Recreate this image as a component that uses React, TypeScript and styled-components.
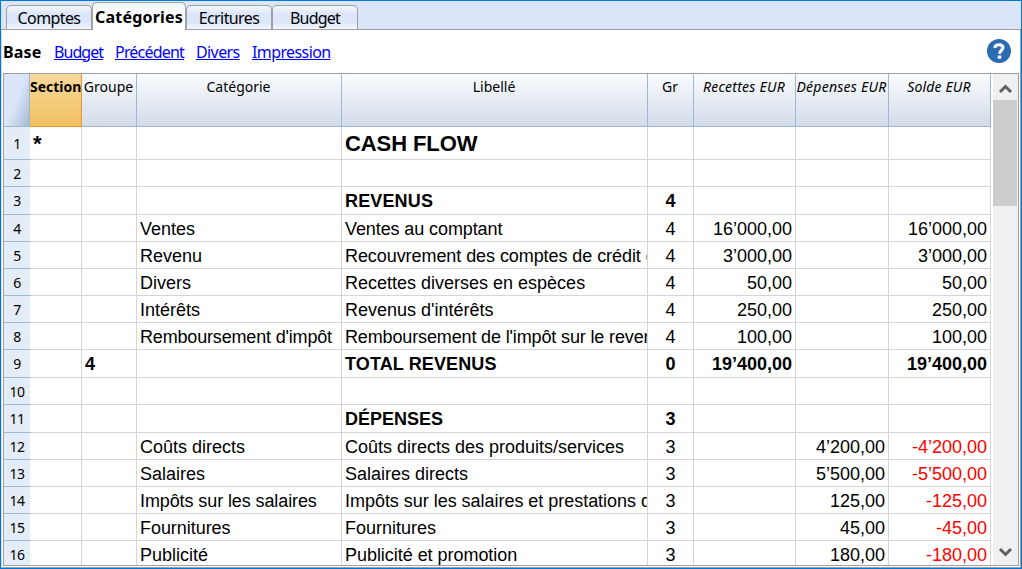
import React from "react";
import styled, { createGlobalStyle, css } from "styled-components";

const GlobalStyle = createGlobalStyle`
  * { box-sizing: border-box; }
  html, body { margin: 0; padding: 0; overflow: hidden; background: #fff; }
`;

const uiFont = `"Noto Sans", "Open Sans", sans-serif`;
const cellFont = `"Liberation Sans", Arial, sans-serif`;

const Window = styled.div`
  width: 1022px;
  height: 569px;
  border: 1px solid #0078d7;
  background: #fff;
  display: flex;
  flex-direction: column;
  font-family: ${uiFont};
  color: #000;
`;

const TabBar = styled.div`
  flex: none;
  height: 29px;
  padding-left: 5px;
  background: #dae5f9;
  border-bottom: 1px solid #a0a0a0;
  display: flex;
  align-items: flex-end;
`;

const Tab = styled.div<{ $active?: boolean; $width: number; $spacing: number }>`
  width: ${(p) => p.$width}px;
  height: 24px;
  border: 1px solid #a0a0a0;
  border-bottom: 0;
  border-radius: 5px 5px 0 0;
  background: linear-gradient(#f4f7fe 0%, #dce6fa 35%, #dce6fa 70%, #f4f7fe 100%);
  font-size: 16px;
  line-height: 24px;
  text-align: center;
  white-space: nowrap;
  letter-spacing: ${(p) => p.$spacing}px;
  ${(p) =>
    p.$active &&
    css`
      height: 28px;
      margin-bottom: -1px;
      font-weight: 700;
      line-height: 29px;
      background: linear-gradient(#f0f4fd, #fff 40%);
    `}
`;

const Body = styled.div`
  flex: 1;
  min-height: 0;
  border: 1px solid #a0a0a0;
  border-top: 0;
  border-left-color: #d8d8d8;
  padding: 0 1px 1px 1px;
  display: flex;
  flex-direction: column;
`;

const ViewBar = styled.div`
  flex: none;
  height: 43px;
  padding: 0 8px 0 0;
  display: flex;
  align-items: center;
  gap: 12px;
  font-size: 16px;
`;

const ViewLabel = styled.b<{ $width: number }>`
  width: ${(p) => p.$width}px;
  white-space: nowrap;
  letter-spacing: 0.2px;
`;

const ViewLink = styled.a<{ $width: number; $spacing: number }>`
  width: ${(p) => p.$width}px;
  white-space: nowrap;
  color: #0000ff;
  text-decoration: underline;
  letter-spacing: ${(p) => p.$spacing}px;
`;

const HelpIcon = styled.svg`
  margin-left: auto;
  margin-top: -1px;
  width: 24px;
  height: 24px;
`;

const GridFrame = styled.div`
  flex: 1;
  min-height: 0;
  border: 1px solid #a0a0a0;
  display: flex;
  justify-content: space-between;
  overflow: hidden;
`;

const Table = styled.div`
  width: 987px;
  flex: none;
`;

const Row = styled.div<{ $height: number }>`
  display: grid;
  grid-template-columns: 26px 52px 55px 205px 306px 46px 102px 93px 102px;
  height: ${(p) => p.$height}px;
`;

const HeaderCorner = styled.div`
  border-right: 1px solid #a0b4cc;
  border-bottom: 1px solid #9eb6ce;
  background: linear-gradient(112deg, #dae5f9 50%, #a4bad4 100%);
`;

const HeaderCell = styled.div<{ $selected?: boolean; $italic?: boolean; $spacing?: number }>`
  padding: 3px 1px 0 0;
  border-right: 1px solid #9eb6ce;
  border-bottom: 1px solid #9eb6ce;
  background: linear-gradient(#f9fcfe, #d3dbe9);
  font-size: 14px;
  line-height: 20px;
  text-align: center;
  white-space: nowrap;
  overflow: hidden;
  font-style: ${(p) => (p.$italic ? "italic" : "normal")};
  letter-spacing: ${(p) => p.$spacing ?? 0}px;
  ${(p) =>
    p.$selected &&
    css`
      padding-right: 0;
      font-weight: 700;
      background: linear-gradient(#f8d99b, #f1c05f);
      border-color: #f29536;
    `}
`;

const RowNumber = styled.div`
  border-bottom: 1px solid #9eb6ce;
  background: #e4ecf7;
  font-size: 14px;
  display: flex;
  align-items: center;
  justify-content: center;
  letter-spacing: -0.5px;
`;

type Align = "left" | "center" | "right";

const Cell = styled.div<{
  $align?: Align;
  $bold?: boolean;
  $title?: boolean;
  $negative?: boolean;
  $spacing?: number;
}>`
  padding: ${(p) => (p.$title ? 1 : 2)}px 3px 0;
  border-right: 1px solid #d5d5d5;
  border-bottom: 1px solid #d5d5d5;
  font-family: ${cellFont};
  font-size: ${(p) => (p.$title ? 22 : 18)}px;
  font-weight: ${(p) => (p.$bold ? 700 : 400)};
  color: ${(p) => (p.$negative ? "#ff0000" : "#000")};
  line-height: ${(p) => (p.$title ? 31 : 25)}px;
  text-align: ${(p) => p.$align ?? "left"};
  letter-spacing: ${(p) => p.$spacing ?? 0}px;
  white-space: nowrap;
  overflow: hidden;
`;

const ScrollBar = styled.div`
  width: 25px;
  background: #f0f0f0;
  display: flex;
  flex-direction: column;
`;

const ScrollButton = styled.svg`
  flex: none;
  width: 24px;
  height: 26px;
`;

const ScrollThumb = styled.div`
  width: 24px;
  height: 106px;
  background: #cdcdcd;
`;

const ScrollTrack = styled.div`
  flex: 1;
`;

interface Line {
  height: number;
  section?: string;
  group?: string;
  category?: string;
  label?: string;
  gr?: string;
  income?: string;
  expense?: string;
  balance?: string;
  bold?: boolean;
  title?: boolean;
  categorySpacing?: number;
  labelSpacing?: number;
}

const lines: Line[] = [
  { height: 33, section: "*", label: "CASH FLOW", bold: true, title: true, labelSpacing: -0.1 },
  { height: 27 },
  { height: 28, label: "REVENUS", gr: "4", bold: true, labelSpacing: 0.15 },
  { height: 27, category: "Ventes", label: "Ventes au comptant", gr: "4", income: "16’000,00", balance: "16’000,00", labelSpacing: -0.1 },
  { height: 27, category: "Revenu", label: "Recouvrement des comptes de crédit clients", gr: "4", income: "3’000,00", balance: "3’000,00", labelSpacing: -0.07 },
  { height: 27, category: "Divers", label: "Recettes diverses en espèces", gr: "4", income: "50,00", balance: "50,00" },
  { height: 27, category: "Intérêts", label: "Revenus d'intérêts", gr: "4", income: "250,00", balance: "250,00" },
  { height: 27, category: "Remboursement d'impôt", label: "Remboursement de l'impôt sur le revenu", gr: "4", income: "100,00", balance: "100,00", categorySpacing: -0.17, labelSpacing: -0.14 },
  { height: 28, group: "4", label: "TOTAL REVENUS", gr: "0", income: "19’400,00", balance: "19’400,00", bold: true, labelSpacing: 0.12 },
  { height: 27 },
  { height: 28, label: "DÉPENSES", gr: "3", bold: true },
  { height: 27, category: "Coûts directs", label: "Coûts directs des produits/services", gr: "3", expense: "4’200,00", balance: "-4’200,00" },
  { height: 27, category: "Salaires", label: "Salaires directs", gr: "3", expense: "5’500,00", balance: "-5’500,00" },
  { height: 27, category: "Impôts sur les salaires", label: "Impôts sur les salaires et prestations diverses", gr: "3", expense: "125,00", balance: "-125,00", categorySpacing: -0.1, labelSpacing: -0.03 },
  { height: 27, category: "Fournitures", label: "Fournitures", gr: "3", expense: "45,00", balance: "-45,00", categorySpacing: -0.05 },
  { height: 27, category: "Publicité", label: "Publicité et promotion", gr: "3", expense: "180,00", balance: "-180,00", labelSpacing: -0.04 },
];

export default function App() {
  return (
    <Window>
      <GlobalStyle />
      <TabBar>
        <Tab $width={86} $spacing={-0.6}>Comptes</Tab>
        <Tab $width={94} $spacing={0.2} $active>Catégories</Tab>
        <Tab $width={86} $spacing={-0.6}>Ecritures</Tab>
        <Tab $width={86} $spacing={-0.8}>Budget</Tab>
      </TabBar>
      <Body>
        <ViewBar>
          <ViewLabel $width={39}>Base</ViewLabel>
          <ViewLink $width={49} $spacing={-0.95}>Budget</ViewLink>
          <ViewLink $width={69} $spacing={-0.8}>Précédent</ViewLink>
          <ViewLink $width={44} $spacing={-0.6}>Divers</ViewLink>
          <ViewLink $width={79} $spacing={-0.6}>Impression</ViewLink>
          <HelpIcon viewBox="0 0 24 24">
            <circle cx="12" cy="12" r="12" fill="#2b6cb0" />
            <path d="M7.800 8.800C8 6.700 9.600 5.700 12 5.700c2.400 0 4 1.200 4 3.100 0 2.500-3.500 2.700-3.500 5.900" fill="none" stroke="#fff" strokeWidth="3.100" />
            <rect x="10.800" y="16.500" width="3.400" height="3.200" fill="#fff" />
          </HelpIcon>
        </ViewBar>
        <GridFrame>
          <Table>
            <Row $height={53}>
              <HeaderCorner />
              <HeaderCell $selected>Section</HeaderCell>
              <HeaderCell>Groupe</HeaderCell>
              <HeaderCell>Catégorie</HeaderCell>
              <HeaderCell>Libellé</HeaderCell>
              <HeaderCell>Gr</HeaderCell>
              <HeaderCell $italic $spacing={0.25}>Recettes EUR</HeaderCell>
              <HeaderCell $italic $spacing={0.25}>Dépenses EUR</HeaderCell>
              <HeaderCell $italic $spacing={0.15}>Solde EUR</HeaderCell>
            </Row>
            {lines.map((l, i) => (
              <Row key={i} $height={l.height}>
                <RowNumber>{i + 1}</RowNumber>
                <Cell $bold={l.bold} $title={l.title}>{l.section}</Cell>
                <Cell $bold={l.bold}>{l.group}</Cell>
                <Cell $bold={l.bold} $spacing={l.categorySpacing}>{l.category}</Cell>
                <Cell $bold={l.bold} $title={l.title} $spacing={l.labelSpacing}>{l.label}</Cell>
                <Cell $bold={l.bold} $align="center">{l.gr}</Cell>
                <Cell $bold={l.bold} $align="right">{l.income}</Cell>
                <Cell $bold={l.bold} $align="right">{l.expense}</Cell>
                <Cell $bold={l.bold} $align="right" $negative={l.balance?.startsWith("-")}>{l.balance}</Cell>
              </Row>
            ))}
          </Table>
          <ScrollBar>
            <ScrollButton viewBox="0 0 24 26">
              <path d="M7 18l5.500-5.500 5.500 5.500" fill="none" stroke="#606060" strokeWidth="3" />
            </ScrollButton>
            <ScrollThumb />
            <ScrollTrack />
            <ScrollButton viewBox="0 0 24 26">
              <path d="M7 10l5.500 5.500 5.500-5.500" fill="none" stroke="#606060" strokeWidth="3" />
            </ScrollButton>
          </ScrollBar>
        </GridFrame>
      </Body>
    </Window>
  );
}
